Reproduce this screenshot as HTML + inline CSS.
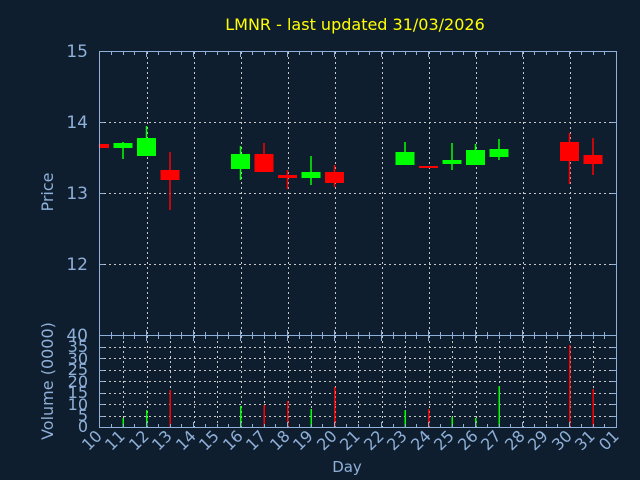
<!DOCTYPE html>
<html><head><meta charset="utf-8"><style>
html,body{margin:0;padding:0;background:#0f1e2f;}
svg{display:block}
text{font-family:"DejaVu Sans","Liberation Sans",sans-serif;}
</style></head><body>
<svg id="s" width="640" height="480" viewBox="0 0 640 480" xmlns="http://www.w3.org/2000/svg">
<rect width="640" height="480" fill="#0f1e2f"/>
<g id="grid"></g>
<g id="cand"></g>
<rect x="99.5" y="51.5" width="517" height="376" fill="none" stroke="#8fb0d8" stroke-width="1"/>
<line x1="99" y1="335.5" x2="617" y2="335.5" stroke="#8fb0d8"/>
<g id="ticks" stroke="#8fb0d8"></g>
<text x="355" y="30" fill="#ffff00" font-size="16" text-anchor="middle">LMNR - last updated 31/03/2026</text>
<g fill="#8fb0d8" font-size="17" text-anchor="end">
<text x="88" y="57">15</text><text x="88" y="128">14</text><text x="88" y="199">13</text><text x="88" y="270">12</text><text x="88" y="341">40</text>
</g>
<g fill="#8fb0d8" font-size="16" text-anchor="end">
<text x="88" y="352">35</text><text x="88" y="364">30</text><text x="88" y="375">25</text><text x="88" y="387">20</text><text x="88" y="398">15</text><text x="88" y="410">10</text><text x="88" y="421">5</text><text x="88" y="432">0</text>
</g>
<text transform="translate(53,192) rotate(-90)" fill="#8fb0d8" font-size="16" text-anchor="middle">Price</text>
<text transform="translate(53,381) rotate(-90)" fill="#8fb0d8" font-size="16" text-anchor="middle">Volume (0000)</text>
<text x="347" y="472" fill="#8fb0d8" font-size="15" text-anchor="middle">Day</text>
<g id="xl" fill="#8fb0d8" font-size="16" text-anchor="end">
<text transform="translate(103,437) rotate(-45)">10</text>
<text transform="translate(126,437) rotate(-45)">11</text>
<text transform="translate(150,437) rotate(-45)">12</text>
<text transform="translate(173,437) rotate(-45)">13</text>
<text transform="translate(197,437) rotate(-45)">14</text>
<text transform="translate(220,437) rotate(-45)">15</text>
<text transform="translate(244,437) rotate(-45)">16</text>
<text transform="translate(267,437) rotate(-45)">17</text>
<text transform="translate(291,437) rotate(-45)">18</text>
<text transform="translate(314,437) rotate(-45)">19</text>
<text transform="translate(338,437) rotate(-45)">20</text>
<text transform="translate(361,437) rotate(-45)">21</text>
<text transform="translate(385,437) rotate(-45)">22</text>
<text transform="translate(408,437) rotate(-45)">23</text>
<text transform="translate(432,437) rotate(-45)">24</text>
<text transform="translate(455,437) rotate(-45)">25</text>
<text transform="translate(479,437) rotate(-45)">26</text>
<text transform="translate(502,437) rotate(-45)">27</text>
<text transform="translate(526,437) rotate(-45)">28</text>
<text transform="translate(549,437) rotate(-45)">29</text>
<text transform="translate(573,437) rotate(-45)">30</text>
<text transform="translate(596,437) rotate(-45)">31</text>
<text transform="translate(620,437) rotate(-45)">01</text>
</g>
</svg>
<script>
var NS="http://www.w3.org/2000/svg";
function el(p,t,a){var e=document.createElementNS(NS,t);for(var k in a)e.setAttribute(k,a[k]);document.getElementById(p).appendChild(e);return e;}
var X=function(d){return 99.5+d*23.5;};
var dash={stroke:"#c8c8c8","stroke-dasharray":"2,3","stroke-width":1};
[122,193,264].forEach(function(y){el("grid","line",Object.assign({x1:99,x2:616,y1:y+.5,y2:y+.5},dash));});
for(var i=2;i<22;i+=2){var x=Math.round(X(i))+.5;el("grid","line",Object.assign({x1:x,x2:x,y1:52,y2:335},dash));}
for(var v=5;v<40;v+=5){var y=Math.round(427-v*2.3)+.5;el("grid","line",Object.assign({x1:99,x2:616,y1:y,y2:y},dash));
 el("ticks","line",{x1:99,x2:104,y1:y,y2:y});el("ticks","line",{x1:611,x2:616,y1:y,y2:y});}
for(var i=1;i<22;i++){var x=Math.round(X(i))+.5;el("grid","line",Object.assign({x1:x,x2:x,y1:336,y2:427},dash));}
[122,193,264].forEach(function(y){el("ticks","line",{x1:99,x2:104,y1:y+.5,y2:y+.5});el("ticks","line",{x1:611,x2:616,y1:y+.5,y2:y+.5});});
for(var i=0;i<=44;i++){var x=Math.round(99+i*11.75)+.5;var L=(i%4==0)?5:3;
 el("ticks","line",{x1:x,x2:x,y1:52,y2:52+L});el("ticks","line",{x1:x,x2:x,y1:427,y2:427-L});el("ticks","line",{x1:x,x2:x,y1:336,y2:336+L});el("ticks","line",{x1:x,x2:x,y1:335,y2:335-L});}
var G="#00ff00",R="#ff0000";
var c=[[0,R,144,148,144,148],[1,G,143,148,142,159],[2,G,138,156,126,156],[3,R,170,180,152,210],
[6,G,154,169,146,180],[7,R,154,172,143,172],[8,R,175,178,170,189],[9,G,172,178,156,185],[10,R,172,183,165,187],
[13,G,152,165,142,165],[14,R,166,167,166,167],[15,G,160,164,143,170],[16,G,150,165,144,165],[17,G,149,157,139,160],
[20,R,142,161,133,184],[21,R,155,164,138,175]];
c.forEach(function(a){var x=X(a[0]);
 el("cand","rect",{x:x-0.75,y:a[4],width:1.5,height:a[5]-a[4],fill:a[1]});
 var l=Math.max(x-9.5,99.5);el("cand","rect",{x:l,y:a[2],width:x+9.5-l,height:Math.max(a[3]-a[2],2),fill:a[1]});});
var vb=[[1,G,418],[2,G,410],[3,R,390],[6,G,406],[7,R,405],[8,R,401],[9,G,409],[10,R,387],
[13,G,410],[14,R,409],[15,G,417],[16,G,418],[17,G,386],[20,R,345],[21,R,389]];
vb.forEach(function(a){var x=X(a[0]);el("cand","rect",{x:x-0.5,y:a[2],width:1.5,height:427-a[2],fill:a[1]});});
</script>
</body></html>
